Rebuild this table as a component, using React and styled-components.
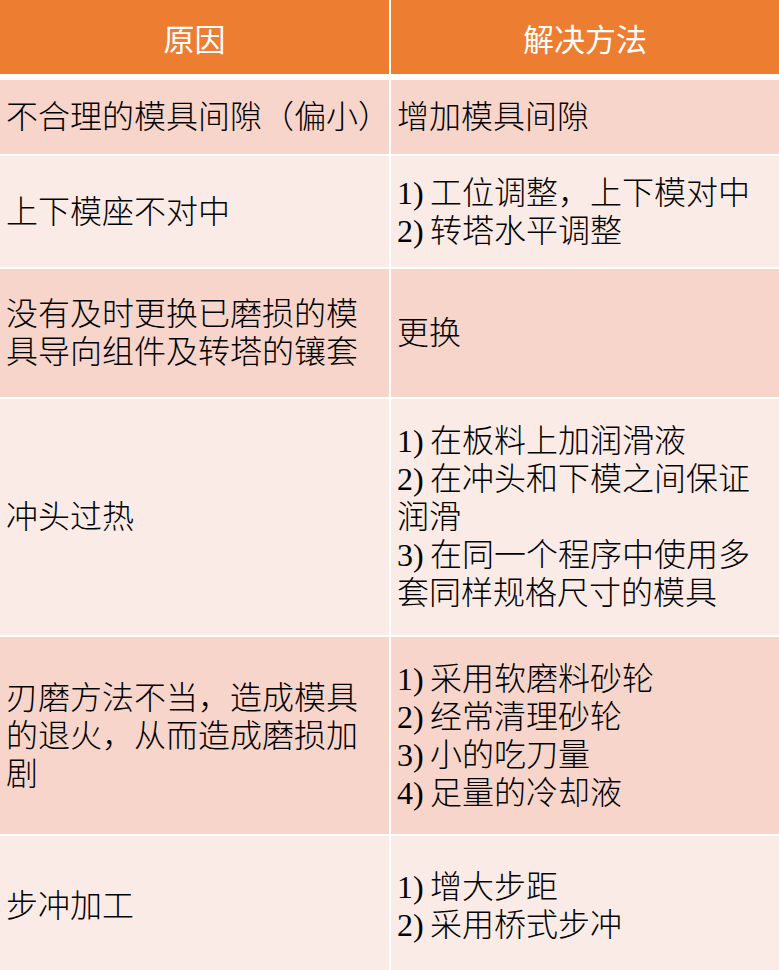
import React from "react";
import styled, { createGlobalStyle } from "styled-components";

const rows = [
  { h: 74, cause: ["不合理的模具间隙（偏小）"], fix: ["增加模具间隙"] },
  { h: 111, cause: ["上下模座不对中"], fix: ["1)\u2009工位调整，上下模对中", "2)\u2009转塔水平调整"] },
  {
    h: 128,
    cause: ["没有及时更换已磨损的模", "具导向组件及转塔的镶套"],
    fix: ["更换"],
  },
  {
    h: 236,
    cause: ["冲头过热"],
    fix: [
      "1)\u2009在板料上加润滑液",
      "2)\u2009在冲头和下模之间保证",
      "润滑",
      "3)\u2009在同一个程序中使用多",
      "套同样规格尺寸的模具",
    ],
  },
  {
    h: 197,
    cause: ["刃磨方法不当，造成模具", "的退火，从而造成磨损加", "剧"],
    fix: ["1)\u2009采用软磨料砂轮", "2)\u2009经常清理砂轮", "3)\u2009小的吃刀量", "4)\u2009足量的冷却液"],
  },
  { h: 140, cause: ["步冲加工"], fix: ["1)\u2009增大步距", "2)\u2009采用桥式步冲"] },
];

const GlobalStyle = createGlobalStyle`
  html, body {
    margin: 0;
    padding: 0;
    background: #ffffff;
  }
  body {
    font-family: "Liberation Serif", "Noto Sans CJK SC", serif;
  }
`;

const Table = styled.div`
  display: grid;
  grid-template-columns: 389px 388px;
  column-gap: 2px;
  row-gap: 2px;
  width: 779px;
  height: 970px;
  overflow: hidden;
  background: #ffffff;
`;

const HeadCell = styled.div`
  height: 74px;
  margin-bottom: 4px;
  background: #ed7d31;
  color: #ffffff;
  font-size: 31px;
  display: flex;
  align-items: center;
  justify-content: center;
  box-sizing: border-box;
`;

const Cell = styled.div`
  background: ${(p) => (p.$odd ? "#f8d5ca" : "#fbebe6")};
  display: flex;
  flex-direction: column;
  justify-content: center;
  padding: 0 6px;
  font-size: 32px;
  line-height: 38px;
  color: #000000;
  font-weight: 300;
  white-space: nowrap;
  box-sizing: border-box;
`;

const Line = styled.span`
  display: block;
`;

export default function App() {
  return (
    <>
      <GlobalStyle />
      <Table>
        <HeadCell>原因</HeadCell>
        <HeadCell>解决方法</HeadCell>
        {rows.map((r, i) => (
          <React.Fragment key={i}>
            <Cell $odd={i % 2 === 0} style={{ height: r.h }}>
              {r.cause.map((t) => (
                <Line key={t}>{t}</Line>
              ))}
            </Cell>
            <Cell $odd={i % 2 === 0} style={{ height: r.h }}>
              {r.fix.map((t) => (
                <Line key={t}>{t}</Line>
              ))}
            </Cell>
          </React.Fragment>
        ))}
      </Table>
    </>
  );
}
